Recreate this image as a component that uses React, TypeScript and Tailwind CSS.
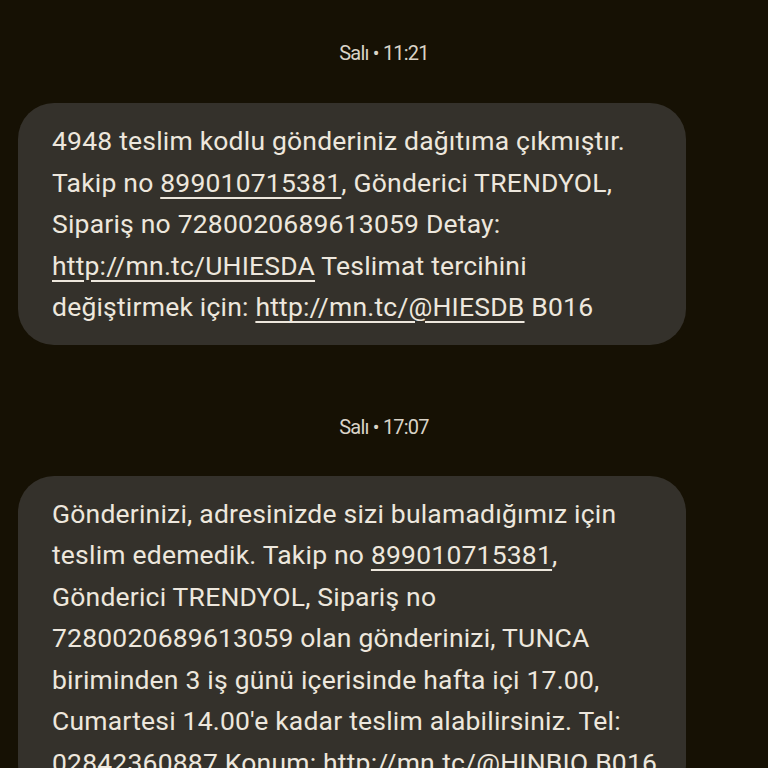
const U = ({ children }: { children: React.ReactNode }) => (
  <span className="underline decoration-2 underline-offset-[5px]">{children}</span>
);

function Stamp({ text, className }: { text: string; className?: string }) {
  return (
    <div className={`text-center text-[20px] text-[#d9d3c7] tracking-[-0.8px] ${className ?? ""}`}>{text}</div>
  );
}

function Bubble({ lines }: { lines: React.ReactNode[] }) {
  return (
    <div className="ml-[18px] w-[668px] rounded-[36px] bg-[#34312b] pl-[34px] pr-4 pt-[17px] pb-[17px]">
      {lines.map((l, i) => (
        <div key={i} className="whitespace-nowrap text-[26.5px] tracking-[0.2px] leading-[41.5px] text-[#ede7dd]">
          {l}
        </div>
      ))}
    </div>
  );
}

export default function App() {
  return (
    <div className="h-[768px] w-[768px] overflow-hidden bg-[#161104]" style={{ fontFamily: "Roboto, 'Noto Sans', sans-serif" }}>
      <Stamp text="Salı • 11:21" className="pt-[38px] leading-[30px]" />
      <div className="mt-[35px]">
        <Bubble
          lines={[
            "4948 teslim kodlu gönderiniz dağıtıma çıkmıştır.",
            <>Takip no <U>899010715381</U>, Gönderici TRENDYOL,</>,
            "Sipariş no 7280020689613059 Detay:",
            <><U>http://mn.tc/UHIESDA</U> Teslimat tercihini</>,
            <>değiştirmek için: <U>http://mn.tc/@HIESDB</U> B016</>,
          ]}
        />
      </div>
      <Stamp text="Salı • 17:07" className="mt-[67px] leading-[30px]" />
      <div className="mt-[34px]">
        <Bubble
          lines={[
            "Gönderinizi, adresinizde sizi bulamadığımız için",
            <>teslim edemedik. Takip no <U>899010715381</U>,</>,
            "Gönderici TRENDYOL, Sipariş no",
            "7280020689613059 olan gönderinizi, TUNCA",
            "biriminden 3 iş günü içerisinde hafta içi 17.00,",
            "Cumartesi 14.00'e kadar teslim alabilirsiniz. Tel:",
            <>02842360887 Konum: <U>http://mn.tc/@HINBIQ</U> B016</>,
          ]}
        />
      </div>
    </div>
  );
}
